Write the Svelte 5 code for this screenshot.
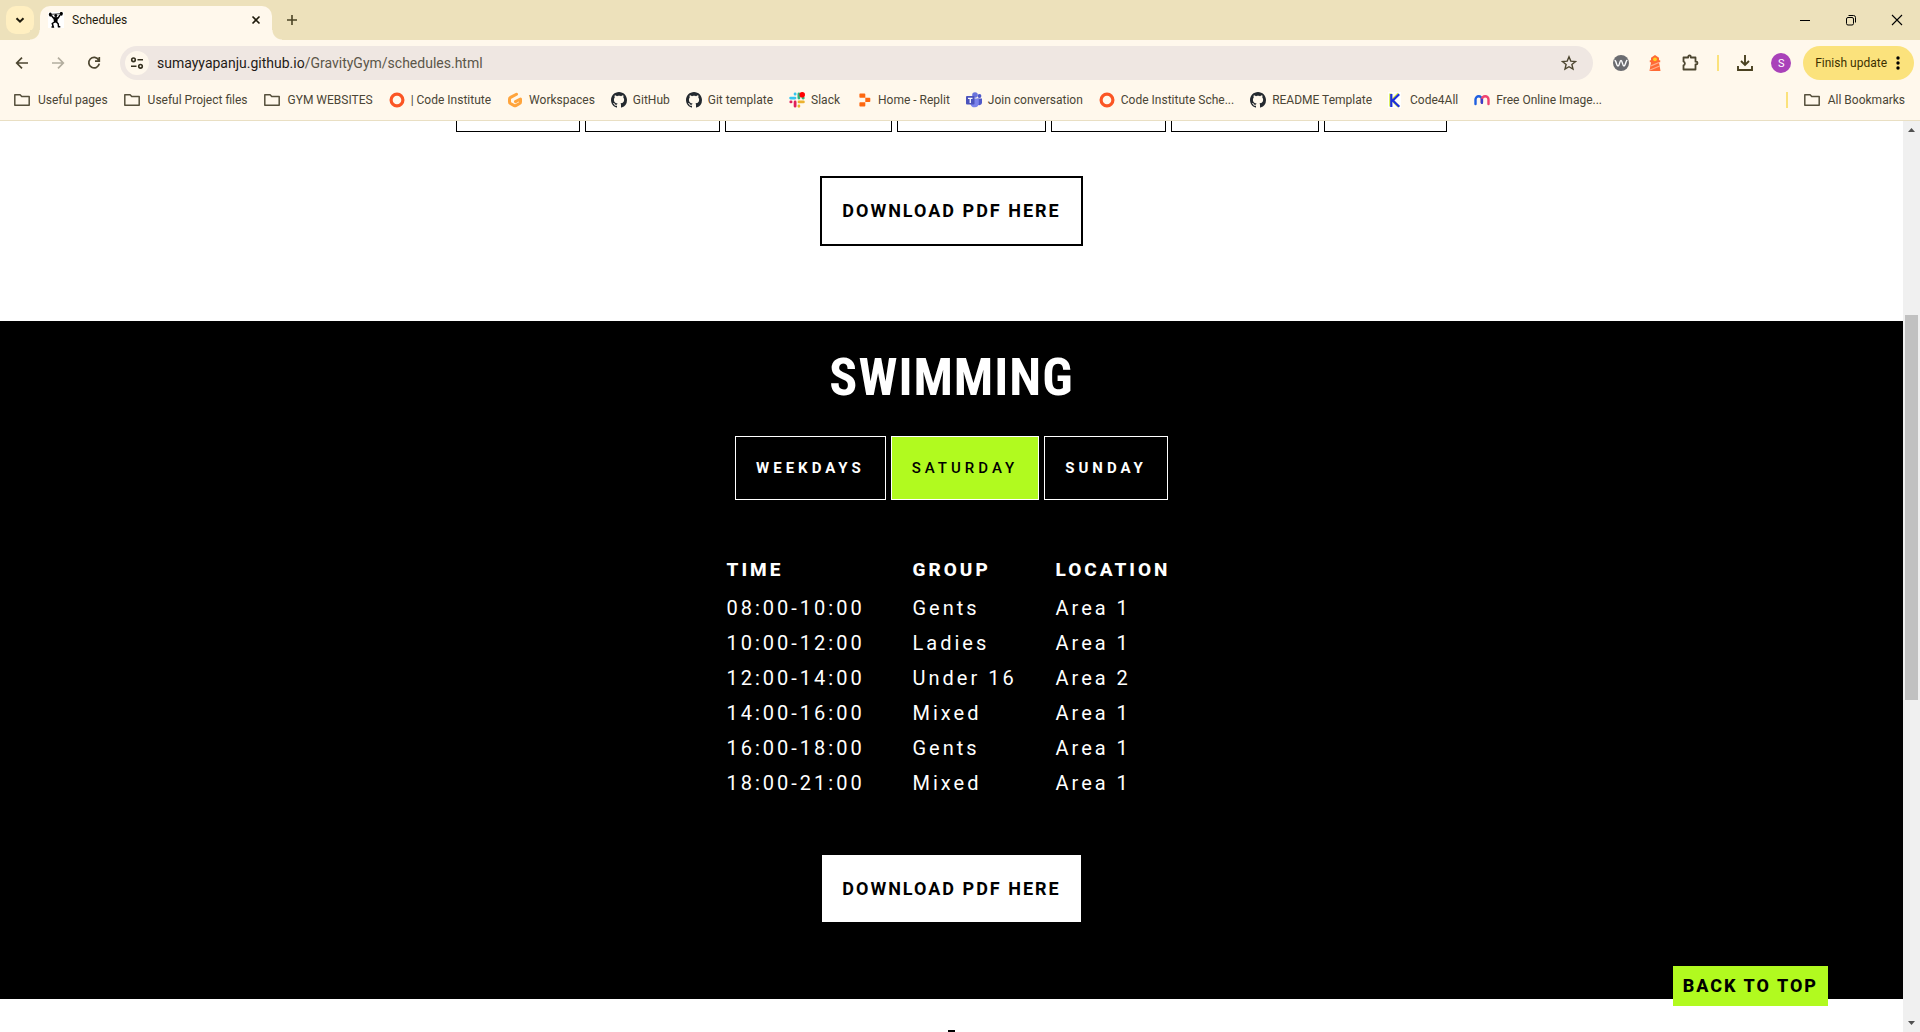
<script>
  const folders = ['Useful pages', 'Useful Project files', 'GYM WEBSITES'];
  const bookmarks = [
    { icon: 'ring', label: '| Code Institute' },
    { icon: 'gitpod', label: 'Workspaces' },
    { icon: 'github', label: 'GitHub' },
    { icon: 'github', label: 'Git template' },
    { icon: 'slack', label: 'Slack' },
    { icon: 'replit', label: 'Home - Replit' },
    { icon: 'teams', label: 'Join conversation' },
    { icon: 'ring', label: 'Code Institute Sche...' },
    { icon: 'github', label: 'README Template' },
    { icon: 'code4all', label: 'Code4All' },
    { icon: 'miro', label: 'Free Online Image...' }
  ];
  const weekdays = [
    { day: 'Monday', width: 124 },
    { day: 'Tuesday', width: 135 },
    { day: 'Wednesday', width: 167 },
    { day: 'Thursday', width: 149 },
    { day: 'Friday', width: 115 },
    { day: 'Saturday', width: 148 },
    { day: 'Sunday', width: 123 }
  ];
  const days = ['Weekdays', 'Saturday', 'Sunday'];
  let selected = $state('Saturday');
  const sessions = [
    ['08:00-10:00', 'Gents', 'Area 1'],
    ['10:00-12:00', 'Ladies', 'Area 1'],
    ['12:00-14:00', 'Under 16', 'Area 2'],
    ['14:00-16:00', 'Mixed', 'Area 1'],
    ['16:00-18:00', 'Gents', 'Area 1'],
    ['18:00-21:00', 'Mixed', 'Area 1']
  ];
</script>

{#snippet icon(name)}
  <svg class="icon" viewBox="0 0 16 16" aria-hidden="true">
    {#if name === 'folder'}
      <path d="M.8 2.800h5.300l1.600 1.700h7.500v8.700H.8z" fill="none" stroke="#56503c" stroke-width="1.500" stroke-linejoin="round" />
    {:else if name === 'ring'}
      <circle cx="8" cy="8" r="5.900" fill="none" stroke="#fb5524" stroke-width="3.200" />
    {:else if name === 'gitpod'}
      <path d="M9.500 2.200 L3.600 5.400 Q2.500 6 2.500 7 V10 Q2.500 11 3.400 11.500 L7.200 13.600 Q8 14 8.800 13.600 L12.600 11.500 Q13.500 11 13.500 10 V7 L8.500 9.600" fill="none" stroke="#ffa43c" stroke-width="3" stroke-linecap="round" stroke-linejoin="round" />
    {:else if name === 'github'}
      <path fill="#24292f" d="M8 0C3.58 0 0 3.58 0 8c0 3.54 2.29 6.53 5.47 7.59.4.07.55-.17.55-.38 0-.19-.01-.82-.01-1.49-2.01.37-2.53-.49-2.69-.94-.09-.23-.48-.94-.82-1.13-.28-.15-.68-.52-.01-.53.63-.01 1.08.58 1.23.82.72 1.21 1.87.87 2.33.66.07-.52.28-.87.51-1.07-1.78-.2-3.64-.89-3.64-3.95 0-.87.31-1.59.82-2.15-.08-.2-.36-1.02.08-2.12 0 0 .67-.21 2.2.82.64-.18 1.32-.27 2-.27s1.36.09 2 .27c1.53-1.04 2.2-.82 2.2-.82.44 1.1.16 1.92.08 2.12.51.56.82 1.27.82 2.15 0 3.07-1.87 3.75-3.65 3.95.29.25.54.73.54 1.48 0 1.07-.01 1.93-.01 2.2 0 .21.15.46.55.38A8.01 8.01 0 0 0 16 8c0-4.42-3.58-8-8-8z" />
    {:else if name === 'slack'}
      <g fill="none" stroke-width="2.800" stroke-linecap="round">
        <path d="M1.600 6.100H6M6.100 1.800v.4" stroke="#36c5f0" />
        <path d="M9.900 2v4.100M14 6.100h.3" stroke="#2eb67d" />
        <path d="M14.400 9.900H10M9.900 14v.3" stroke="#ecb22e" />
        <path d="M6.100 14.200V9.900M1.800 9.900h.3" stroke="#e01e5a" />
      </g>
      <circle cx="13.200" cy="2.800" r="2.800" fill="#f00" />
    {:else if name === 'replit'}
      <path fill="#fd6710" d="M4.200 1.500h4.300q.8 0 .8.8v3.400H4.200q-.8 0-.8-.8V2.300q0-.8.8-.8zM9.300 5.700h4.200q.8 0 .8.8v2.800q0 .8-.8.8H9.300zM3.400 11.100q0-.8.8-.8h5.100v3.400q0 .8-.8.8H4.200q-.8 0-.8-.8z" />
    {:else if name === 'teams'}
      <circle cx="9" cy="3" r="2.800" fill="#6b74dc" />
      <circle cx="13.500" cy="4" r="1.900" fill="#5059c9" />
      <path d="M11.500 6.500H16v4.500a2.800 2.800 0 0 1-4.500 1.500z" fill="#5059c9" />
      <path d="M4.500 6.500h8.300v5A4.200 4.200 0 0 1 4.500 12z" fill="#7b83eb" />
      <rect y="4" width="8.500" height="8.500" rx="1" fill="#4b53bc" />
      <path d="M2 6.300h4.500M4.250 6.300V11" stroke="#fff" stroke-width="1.300" />
    {:else if name === 'code4all'}
      <path fill="#fff" d="M0 0h13v16H0z" />
      <path d="M2.500 1.500v13M10.500 1.700 4 8l6.500 6.500" fill="none" stroke="#d8ec3c" stroke-width="2.600" />
      <path d="M3.300 2v13M11.200 2.200 4.800 8.500l6.500 6.200" fill="none" stroke="#1b2fe0" stroke-width="2.200" />
    {:else if name === 'miro'}
      <path d="M1.500 12V7.500a3.200 3.200 0 0 1 6.400 0v3" fill="none" stroke="#1f5fe0" stroke-width="2.400" stroke-linecap="round" />
      <path d="M7.900 10.500V7.500a3.200 3.200 0 0 1 6.600 0V12" fill="none" stroke="#f0436f" stroke-width="2.400" stroke-linecap="round" />
      <path d="M7.900 11V7.500" stroke="#3a3ec8" stroke-width="2.200" stroke-linecap="round" />
    {/if}
  </svg>
{/snippet}

<div class="window">
  <header class="browser">
    <div class="tabstrip">
      <button class="tab-search" aria-label="Search tabs">
        <svg width="16" height="16" viewBox="0 0 16 16"><path d="M4.500 6.200 8 9.700l3.500-3.500" fill="none" stroke="#1f1b0c" stroke-width="2" /></svg>
      </button>
      <div class="tab">
        <svg width="16" height="16" viewBox="0 0 16 16" aria-hidden="true">
          <path fill="#fff" d="M0 0h16v16H0z" />
          <path d="M1 2.500 14.500 1.500" stroke="#111" stroke-width=".8" />
          <ellipse cx="2.300" cy="2.600" rx="1.400" ry="2.100" /><ellipse cx="13.300" cy="1.800" rx="1.500" ry="2" />
          <circle cx="7.800" cy="3.600" r="1.500" />
          <path d="M3.200 3.200 5.500 6h4.700L12 2.800M7.700 5.500 7.300 10M7.300 9.500l-3 2 1 3.500H3.500M8 9.500l2.200 2.300.3 3h1.800" fill="none" stroke="#000" stroke-width="1.500" />
          <path d="M5.300 5.500h4.700L9.300 10.500H6z" />
        </svg>
        <span>Schedules</span>
        <button class="tab-close" aria-label="Close tab">
          <svg width="16" height="16" viewBox="0 0 16 16"><path d="m4.500 4.500 7 7m0-7-7 7" stroke="#1f1b0c" stroke-width="1.600" /></svg>
        </button>
      </div>
      <button class="new-tab" aria-label="New tab">
        <svg width="16" height="16" viewBox="0 0 16 16"><path d="M8 3v10M3 8h10" stroke="#4a4324" stroke-width="1.600" /></svg>
      </button>
      <div class="controls">
        <button aria-label="Minimize"><svg width="12" height="12" viewBox="0 0 12 12"><path d="M1 6.500h10" stroke="#000" /></svg></button>
        <button aria-label="Restore"><svg width="12" height="12" viewBox="0 0 12 12" fill="none" stroke="#000"><rect x="1.500" y="3.500" width="7" height="7.500" rx="1.500" /><path d="M3.500 1.500h5a2 2 0 0 1 2 2v5" /></svg></button>
        <button aria-label="Close"><svg width="12" height="12" viewBox="0 0 12 12"><path d="m1 1 10 10m0-10L1 11" stroke="#000" stroke-width="1.100" /></svg></button>
      </div>
    </div>

    <div class="toolbar">
      <button class="nav" aria-label="Back"><svg width="16" height="16" viewBox="0 0 16 16"><path d="M14 8H3M8 2.700 2.700 8 8 13.300" fill="none" stroke="#4d4630" stroke-width="1.700" /></svg></button>
      <button class="nav" aria-label="Forward"><svg width="16" height="16" viewBox="0 0 16 16"><path d="M2 8h11M8 2.700 13.300 8 8 13.300" fill="none" stroke="#b3ad9e" stroke-width="1.700" /></svg></button>
      <button class="nav" aria-label="Reload"><svg width="16" height="16" viewBox="0 0 16 16"><path d="M12.700 5A5.300 5.300 0 1 0 13.300 8.700M13.300 2v4.200H9" fill="none" stroke="#4d4630" stroke-width="1.700" /></svg></button>
      <div class="omnibox">
        <button class="site-info" aria-label="View site information">
          <svg width="16" height="16" viewBox="0 0 16 16" fill="none" stroke="#35301f" stroke-width="1.600"><circle cx="4.500" cy="4.800" r="1.800" /><path d="M8.500 4.800H14M2 11.300h5.500" /><circle cx="11.500" cy="11.300" r="1.800" /></svg>
        </button>
        <a class="url" href="#top">sumayyapanju.github.io<span>/GravityGym/schedules.html</span></a>
        <button class="star" aria-label="Bookmark this tab">
          <svg width="16" height="16" viewBox="0 0 16 16"><path d="m8 1.800 1.800 4.300 4.700.4-3.600 3 1.100 4.600L8 11.700l-4 2.400 1.100-4.600-3.600-3 4.700-.4z" fill="none" stroke="#4d4630" stroke-width="1.400" /></svg>
        </button>
      </div>
      <div class="extensions">
        <button aria-label="Wave extension"><svg width="16" height="16" viewBox="0 0 16 16"><circle cx="8" cy="8" r="8" fill="#6b6c70" /><path d="M1.500 5.500c1.800-.6 1.800 5.500 3.500 5.500s1.500-5.500 3-5.500 1.300 5.500 3 5.500 1.800-6.500 3.500-5.500" fill="none" stroke="#fff" stroke-width="1.400" /></svg></button>
        <button aria-label="Lighthouse"><svg width="16" height="16" viewBox="0 0 16 16"><path d="M8 0 12 2.800v2.400h1.200v2H12l1.500 8.800h-11L4 7.200H2.800v-2H4V2.800z" fill="#ff6a35" /><circle cx="8" cy="4.300" r="1.900" fill="#ffd31a" /><path d="M4 10.800 12 7.500M3 15l9.700-4" stroke="#ffb08c" stroke-width="1.300" /></svg></button>
        <button aria-label="Extensions"><svg width="18" height="18" viewBox="0 0 18 18"><path d="M2.500 3.500h4.700v-.8a1 1 0 0 1 2.600 0v.8h4.700v4.200h.7a1.300 1.300 0 0 1 0 2.600h-.7v5.200h-12v-4.200a2 2 0 0 0 0-3.800z" fill="none" stroke="#4d4630" stroke-width="1.800" stroke-linejoin="round" /></svg></button>
        <span class="divider"></span>
        <button aria-label="Downloads"><svg width="16" height="16" viewBox="0 0 16 16"><path d="M8 0v9.500M4 6l4 4 4-4M1 11v4h14v-4" fill="none" stroke="#4a4120" stroke-width="1.900" /></svg></button>
        <button class="avatar" aria-label="Profile">S</button>
      </div>
      <button class="update">Finish update
        <svg width="4" height="16" viewBox="0 0 4 16" aria-hidden="true"><circle cx="2" cy="3" r="1.700" /><circle cx="2" cy="8" r="1.700" /><circle cx="2" cy="13" r="1.700" /></svg>
      </button>
    </div>

    <nav class="bookmarks">
      {#each folders as label}
        <button class="folder">{@render icon('folder')}{label}</button>
      {/each}
      {#each bookmarks as { icon: name, label }}
        <a href="#top">{@render icon(name)}{label}</a>
      {/each}
      <span class="divider"></span>
      <button class="folder">{@render icon('folder')}All Bookmarks</button>
    </nav>
  </header>

  <div class="viewport">
    <main class="page" id="top">
      <section class="light">
        <div class="weekdays">
          {#each weekdays as { day, width }}
            <button aria-label={day} style:width="{width}px"></button>
          {/each}
        </div>
        <a class="download outlined" href="#top">DOWNLOAD PDF HERE</a>
      </section>

      <section class="swimming">
        <h2>SWIMMING</h2>
        <div class="days">
          {#each days as day}
            <button class:active={selected === day} onclick={() => (selected = day)}>{day.toUpperCase()}</button>
          {/each}
        </div>
        <table>
          <thead>
            <tr><th>TIME</th><th>GROUP</th><th>LOCATION</th></tr>
          </thead>
          <tbody>
            {#each sessions as [time, group, location]}
              <tr><td>{time}</td><td>{group}</td><td>{location}</td></tr>
            {/each}
          </tbody>
        </table>
        <a class="download" href="#top">DOWNLOAD PDF HERE</a>
      </section>

      <section class="next"><span></span></section>
    </main>
    <a class="to-top" href="#top">BACK TO TOP</a>

    <div class="scrollbar" aria-hidden="true">
      <svg width="17" height="17" viewBox="0 0 17 17"><path d="M5 11h7L8.500 7z" fill="#505050" /></svg>
      <div class="track"><div class="thumb"></div></div>
      <svg width="17" height="17" viewBox="0 0 17 17"><path d="M5 6h7l-3.500 4z" fill="#505050" /></svg>
    </div>
  </div>
</div>

<style>
  :global(body) {
    margin: 0;
    background: #fff;
  }

  .window {
    display: flex;
    flex-direction: column;
    height: 100vh;
    overflow: hidden;
    font-family: Roboto, sans-serif;
    font-size: 12px;
    color: #4a4535;
  }

  .window *,
  .window *::before,
  .window *::after {
    box-sizing: border-box;
  }

  button {
    display: flex;
    align-items: center;
    justify-content: center;
    padding: 0;
    border: 0;
    background: none;
    font: inherit;
    color: inherit;
    cursor: pointer;
  }

  a {
    color: inherit;
    text-decoration: none;
  }

  svg {
    display: block;
    flex: none;
  }

  .icon {
    width: 16px;
    height: 16px;
  }

  .browser {
    background: #fff8ec;
    border-bottom: 1px solid #e9dfc3;
  }

  .tabstrip {
    display: flex;
    align-items: center;
    height: 40px;
    padding-left: 6px;
    background: #ede1bb;
  }

  .tab-search {
    width: 28px;
    height: 28px;
    border-radius: 10px;
    background: #ffefc1;
  }

  .tab {
    position: relative;
    display: flex;
    align-items: center;
    align-self: flex-end;
    gap: 8px;
    width: 232px;
    height: 34px;
    margin-left: 6px;
    padding: 0 8px 6px;
    border-radius: 10px 10px 0 0;
    background: #fff8ec;
    color: #1f1b0c;
  }

  .tab::before,
  .tab::after {
    content: '';
    position: absolute;
    bottom: 0;
    width: 10px;
    height: 10px;
  }

  .tab::before {
    right: 100%;
    background: radial-gradient(circle at 0 0, #ede1bb 9px, #fff8ec 10px);
  }

  .tab::after {
    left: 100%;
    background: radial-gradient(circle at 100% 0, #ede1bb 9px, #fff8ec 10px);
  }

  .tab-close {
    margin-left: auto;
  }

  .new-tab {
    width: 28px;
    height: 28px;
    margin-left: 6px;
  }

  .controls {
    display: flex;
    height: 40px;
    margin-left: auto;
  }

  .controls button {
    width: 46px;
  }

  .toolbar {
    display: flex;
    align-items: center;
    gap: 2px;
    height: 46px;
    padding: 0 6px 0 5px;
  }

  .nav {
    width: 34px;
    height: 34px;
  }

  .omnibox {
    display: flex;
    flex: 1;
    align-items: center;
    height: 34px;
    margin-left: 7px;
    padding: 0 16px 0 5px;
    border-radius: 17px;
    background: #efe7e2;
  }

  .site-info {
    width: 24px;
    height: 24px;
    border-radius: 50%;
    background: #fff8ec;
  }

  .url {
    margin-left: 8px;
    font-size: 14px;
    color: #1f1b16;
  }

  .url span {
    color: #5b5649;
  }

  .star {
    margin-left: auto;
  }

  .extensions {
    display: flex;
    align-items: center;
    gap: 18px;
    padding: 0 10px 0 18px;
  }

  .divider {
    width: 2px;
    height: 16px;
    background: #fbe27c;
  }

  .avatar {
    width: 20px;
    height: 20px;
    border-radius: 50%;
    background: #a941b9;
    font-size: 11px;
    color: #fff;
  }

  .update {
    gap: 9px;
    height: 34px;
    padding: 0 14px 0 12px;
    border-radius: 17px;
    background: #fbe27c;
    color: #3b3000;
  }

  .bookmarks {
    display: flex;
    align-items: center;
    gap: 16px;
    height: 34px;
    padding: 0 15px 6px 14px;
  }

  .bookmarks a,
  .bookmarks button {
    display: flex;
    align-items: center;
    gap: 6px;
    white-space: nowrap;
  }

  .bookmarks .folder {
    gap: 8px;
  }

  .bookmarks .divider {
    margin-left: auto;
  }

  .viewport {
    position: relative;
    display: flex;
    flex: 1;
    min-height: 0;
    font-size: 18px;
    color: #000;
  }

  .page {
    flex: 1;
    overflow: hidden;
    background: #fff;
  }

  section {
    display: flex;
    flex-direction: column;
    align-items: center;
  }

  .light {
    padding-bottom: 75px;
  }

  .weekdays,
  .days {
    display: flex;
    gap: 5px;
  }

  .weekdays button {
    height: 11px;
    border: 1px solid #000;
    border-top: 0;
  }

  .days button {
    height: 64px;
    padding: 0 20px;
    border: 1px solid #fff;
    font-size: 15px;
    font-weight: 700;
    letter-spacing: 4px;
  }

  .days .active {
    background: #b1fa1f;
    font-weight: 500;
    color: #000;
  }

  .download {
    padding: 20px;
    background: #fff;
    font-weight: 700;
    line-height: 27px;
    letter-spacing: 2px;
    color: #000;
  }

  .outlined {
    margin-top: 44px;
    border: 2px solid #000;
    line-height: 26px;
  }

  .swimming {
    padding: 26px 0 77px;
    background: #000;
    color: #fff;
  }

  h2 {
    margin: 0 0 27px;
    font-family: 'Roboto Condensed', 'Liberation Sans Narrow', Roboto, sans-serif;
    font-size: 52px;
    font-weight: 700;
    line-height: 62px;
    letter-spacing: 1px;
  }

  table {
    margin: 49px 0 54px;
    border-collapse: collapse;
    font-size: 20px;
    letter-spacing: 3px;
  }

  th,
  td {
    padding: 0;
    text-align: left;
    line-height: 35px;
  }

  th {
    font-size: 19px;
    font-weight: 800;
    line-height: 42px;
  }

  th:nth-child(1) {
    width: 186px;
  }

  th:nth-child(2) {
    width: 143px;
  }

  th:nth-child(3) {
    width: 121px;
  }

  .next {
    padding-top: 31px;
  }

  .next span {
    width: 7px;
    height: 60px;
    background: #000;
  }

  .to-top {
    position: absolute;
    right: 92px;
    bottom: 26px;
    padding: 0 10px;
    background: #b1fa1f;
    font-weight: 800;
    line-height: 40px;
    letter-spacing: 2px;
  }

  .scrollbar {
    display: flex;
    flex-direction: column;
    width: 17px;
    background: #f0f0f0;
  }

  .track {
    display: flex;
    flex: 1;
    flex-direction: column;
    padding: 0 2px;
  }

  .track::before {
    content: '';
    flex: 177;
  }

  .track::after {
    content: '';
    flex: 315;
  }

  .thumb {
    flex: 385;
    background: #c1c1c1;
  }
</style>
